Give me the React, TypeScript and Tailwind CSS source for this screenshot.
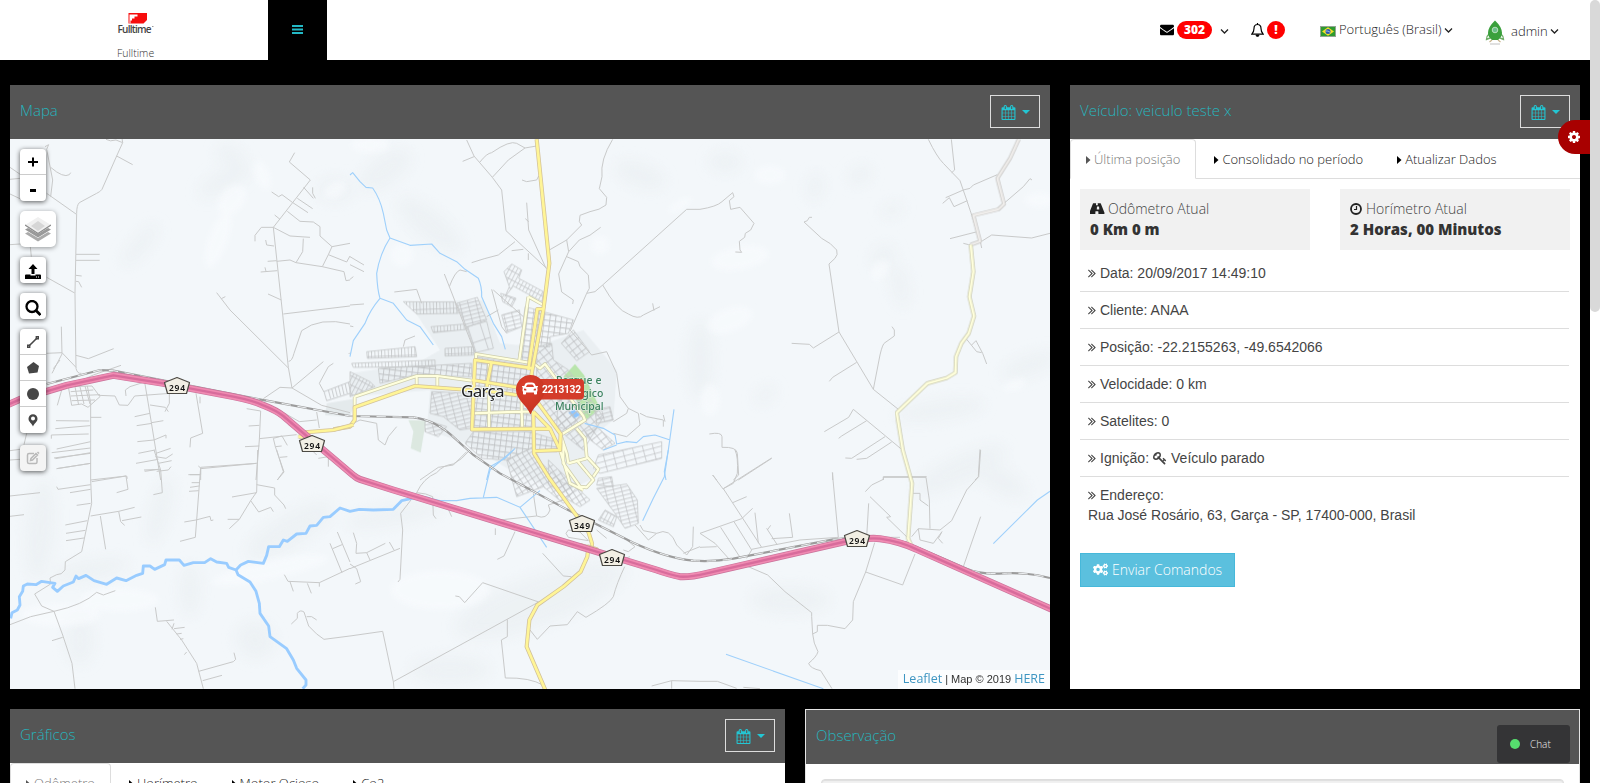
import React from "react";
import { FaEnvelope, FaCogs, FaCar } from "react-icons/fa";

const CALENDAR =
  "M192 1664h288v-288h-288v288zM544 1664h320v-288h-320v288zM192 1312h288v-320h-288v320zM544 1312h320v-320h-320v320zM192 928h288v-288h-288v288zM928 1664h320v-288h-320v288zM544 928h320v-288h-320v288zM1312 1664h288v-288h-288v288zM928 1312h320v-320h-320v320zM576 448v-288q0-13-9.5-22.5t-22.5-9.5h-64q-13 0-22.5 9.5t-9.5 22.5v288q0 13 9.5 22.5t22.5 9.5h64q13 0 22.5-9.5t9.5-22.5zM1312 1312h288v-320h-288v320zM928 928h320v-288h-320v288zM1312 928h288v-288h-288v288zM1344 448v-288q0-13-9.5-22.5t-22.5-9.5h-64q-13 0-22.5 9.5t-9.5 22.5v288q0 13 9.5 22.5t22.5 9.5h64q13 0 22.5-9.5t9.5-22.5zM1728 384v1280q0 52-38 90t-90 38h-1408q-52 0-90-38t-38-90v-1280q0-52 38-90t90-38h128v-96q0-66 47-113t113-47h64q66 0 113 47t47 113v96h384v-96q0-66 47-113t113-47h64q66 0 113 47t47 113v96h128q52 0 90 38t38 90z";
const KEY =
  "M832 512q0-80-56-136t-136-56-136 56-56 136q0 42 19 83-41-19-83-19-80 0-136 56t-56 136 56 136 136 56 136-56 56-136q0-42-19-83 41 19 83 19 80 0 136-56t56-136zm851 704q0 17-49 66t-66 49q-9 0-28.5-16t-36.5-33-38.5-40-24.5-26l-96 96 220 220q28 28 28 68 0 42-39 81t-81 39q-40 0-68-28l-671-671q-176 131-365 131-163 0-265.5-102.5t-102.5-265.5q0-160 95-313t248-248 313-95q163 0 265.5 102.5t102.5 265.5q0 189-131 365l355 355 96-96q-3-3-26-24.5t-40-38.5-33-36.5-16-28.5q0-17 49-66t66-49q13 0 23 10 6 6 46 44.5t82 79.5 86.5 86 73 78 28.5 41z";
const DOUBLE_RIGHT =
  "M979 960q0 13-10 23l-466 466q-10 10-23 10t-23-10l-50-50q-10-10-10-23t10-23l393-393-393-393q-10-10-10-23t10-23l50-50q10-10 23-10t23 10l466 466q10 10 10 23zm384 0q0 13-10 23l-466 466q-10 10-23 10t-23-10l-50-50q-10-10-10-23t10-23l393-393-393-393q-10-10-10-23t10-23l50-50q10-10 23-10t23 10l466 466q10 10 10 23z";
const ROAD =
  "M1111 1001v-4l-24-320q-1-13-11-22.5t-23-9.5h-186q-13 0-23 9.5t-11 22.5l-24 320v4q-1 12 8 20t21 8h244q12 0 21-8t8-20zm622 467q0 73-46 73h-704q13 0 22-9.5t8-22.5l-20-256q-1-13-11-22.5t-23-9.5h-272q-13 0-23 9.5t-11 22.5l-20 256q-1 13 8 22.5t22 9.5h-704q-46 0-46-73 0-54 26-116l417-1044q8-19 26-33t38-14h339q-13 0-23 9.5t-11 22.5l-15 192q-1 14 8 23t22 9h166q13 0 22-9t8-23l-15-192q-1-13-11-22.5t-23-9.5h339q20 0 38 14t26 33l417 1044q26 62 26 116z";
const COG =
  "M1152 896q0-106-75-181t-181-75-181 75-75 181 75 181 181 75 181-75 75-181zm512-109v222q0 12-8 23t-20 13l-185 28q-19 54-39 91 35 50 107 138 10 12 10 25t-9 23q-27 37-99 108t-94 71q-12 0-26-9l-138-108q-44 23-91 38-16 136-29 186-7 28-36 28h-222q-14 0-24.5-8.5t-11.5-21.5l-28-184q-49-16-90-37l-141 107q-10 9-25 9-14 0-25-11-126-114-165-168-7-10-7-23 0-12 8-23 15-21 51-66.5t54-70.5q-27-50-41-99l-183-27q-13-2-21-12.5t-8-23.5v-222q0-12 8-23t19-13l186-28q14-46 39-92-40-57-107-138-10-12-10-24 0-10 9-23 26-36 98.5-107.5t94.5-71.5q13 0 26 10l138 107q44-23 91-38 16-136 29-186 7-28 36-28h222q14 0 24.5 8.5t11.5 21.5l28 184q49 16 90 37l142-107q9-9 24-9 13 0 25 10 129 119 165 170 7 8 7 22 0 12-8 23-15 21-51 66.5t-54 70.5q26 50 41 98l183 28q13 2 21 12.5t8 23.5z";

function Glyph({ d, size, className = "" }: { d: string; size: number; className?: string }) {
  return (
    <svg width={size} height={size} viewBox="0 0 1792 1792" fill="currentColor" className={`shrink-0 ${className}`}>
      <path d={d} />
    </svg>
  );
}

function AngleDown({ className = "" }: { className?: string }) {
  return (
    <svg width="9" height="9" viewBox="0 0 9 9" fill="none" stroke="#222" strokeWidth="1.3" className={`shrink-0 ${className}`}>
      <path d="M1 2.5 4.500 6 8 2.5" />
    </svg>
  );
}

/* Map sheets: each covers a 350px-wide section, drawn at three units per pixel. */
type Sheet = { x: number; y: number; roads: string[]; streams?: string[] };
const sheets: Sheet[] = [
  {
    x: 0,
    y: 130,
    roads: [
      "M318 28Q330 36 348 30L368 38L350 78L306 178Q300 186 290 190L238 218Q230 226 230 250L225 490L228 715Q232 732 244 730",
      "M368 38L366 24M350 78L398 104M30 112L62 134M30 148L60 145M30 192L60 206M135 50L146 44L140 58L158 150L152 200M152 112Q190 145 208 134L212 128",
      "M140 190L228 252M228 373H299M228 391H299M228 436L245 438M228 454L236 455L245 472M140 442L224 489M184 590L186 672L156 730M140 670L186 668L228 712M228 676L265 686L341 656",
      "M30 344L90 340L94 380M884 68L868 96L931 150L820 292L865 712L876 774M911 172L940 205M938 172V190L946 205M892 205L938 236M877 217L924 248M815 186L836 200L846 194L877 217M862 244L900 274L940 276L960 290L960 318L996 350L1050 340M996 350L985 374L967 410M985 374L1040 396L1050 378M824 255L840 268",
      "M820 292L784 292L765 316V334M820 292L870 318L930 322M910 326L908 365L888 398M830 394L870 390L888 398L967 410L1032 425L1038 452L1050 450M803 394L830 392M782 426L832 422M795 412L798 424M797 330L800 345L822 348M650 488L690 540L865 714M664 506L676 500M804 492L844 510M850 552L1050 528M866 694Q876 694 882 670L905 602Q960 560 1050 582M876 774L970 695M876 774L965 826L1050 848M790 806L840 772L876 774M958 760L985 710L1000 700M958 760L972 786M160 716L180 690M1050 668L1046 672",
      "M205 770L215 826L245 822L264 832L300 800L276 768L205 770M212 785L280 780M212 798L300 794M215 812L285 810M225 770L236 825M240 770L252 822M255 768L270 822M172 826L185 780M296 796L345 798L358 825L384 826L404 798L510 790M205 770L280 735L363 706M262 768L272 818V1050M376 780L390 770L434 756L445 822L482 1050M376 780L378 798M272 862H304M168 872L268 873M166 896L270 887M154 926V915L266 912M170 957L272 935M155 968L272 954M166 986L272 968M170 1016L272 1000M272 1050L380 1038L382 1046",
      "M404 860L450 850M410 887L456 880M412 935L462 930M415 970L465 960M408 1000L475 988M432 1020L480 1018M450 825L496 832L505 845M455 878L490 872M462 930L498 915V925M468 970L512 955M475 1000L515 992M508 788V820L495 845M588 790L608 910L572 924L570 952M600 800V820M740 836L782 843L778 930L768 1050M746 888L778 886M735 950L778 948M778 926L890 914M820 925L826 950L852 1026L832 1050M820 925L846 918L862 946M826 950L845 948M950 846L958 894M830 836L898 875L950 870M570 1034H602V1016L770 1000M602 1016V1050M30 962L60 958M30 990L60 988M80 910L72 944M955 985L985 980V1010M940 965L950 975",
    ],
  },
  {
    x: 350,
    y: 130,
    roads: [
      "M350 30L372 78L427 142L455 180L468 302L590 415M338 94L372 80M390 96Q410 70 425 68Q480 30 500 40L525 54M427 142L475 90L525 54L560 48M516 150L530 155L560 150L566 138M530 218L536 300L588 415M526 266L536 275M485 362L520 358M535 370V390M365 398Q400 386 445 375L495 335",
      "M788 28Q750 90 756 140L748 176L770 202L768 225Q750 240 720 245L690 256L688 275L695 285L650 330L598 360M650 330L656 365L626 432L635 486L670 510L668 522M656 365L688 330Q720 320 752 292M650 380L685 395L690 410L715 435L718 475L710 490L735 485L758 465L1010 238H1050M758 465Q800 540 835 552Q865 570 880 555L930 530M908 520L912 542M710 490L662 600",
      "M0 380L42 405M0 404L42 425M0 448L10 440M0 525L42 522M133 486L200 478L215 520M283 432L298 470L376 670M298 470Q315 425 330 420L350 425M425 478L455 590L470 610M410 560L445 540M430 480L520 560M660 600L725 675L770 665L800 730L810 800L835 835L830 850L790 875M835 835L865 850L870 885L830 920L790 910M870 850L890 860L940 870V890M940 855L945 875",
      "M0 588L10 590M160 650L165 630L195 618M0 885L30 870L80 880L85 930L105 945L115 920L140 890M350 965L310 1005L265 1012L210 1050",
    ],
    streams: [
      "M0 135L8 128L30 155L48 172L68 174Q90 205 100 250L110 300L120 324L180 346L245 342L270 370L320 395L345 418L385 445Q396 470 395 500L430 580L455 620L466 658",
      "M120 324Q90 370 80 430Q82 480 90 505Q60 540 45 580L10 632L0 680M90 505L130 520L170 570L210 590L250 645",
      "M495 955L465 985L420 1010L410 1050M704 880L760 895L795 915L800 942L830 935L860 938L880 920L915 915L960 930M760 960L800 945M972 838L955 960L943 1025L948 1050",
    ],
  },
  {
    x: 700,
    y: 130,
    roads: [
      "M0 238Q50 230 66 215L98 188L102 200L88 212L92 238L120 232L162 280L152 300L136 310L134 322L118 334L120 360L125 367L106 366M336 262L328 262L322 272L312 276L365 325Q395 340 410 360Q415 375 405 385L387 402L417 606L520 778L595 838M417 606L340 654L328 643L275 640M470 697L398 742L388 754M520 778L540 675Q548 640 555 638L583 618V600L576 590",
      "M685 28Q710 80 730 100L780 152L800 210L840 330L845 354M754 28L764 120L755 128M737 203L790 180L810 175L820 165L892 134M728 220L748 203L762 230L802 212M750 326L832 305M790 340L806 344L848 332L875 315L995 324L1050 310M912 220L970 170L990 146L996 150M800 628L830 665L845 668M815 645L828 632L848 670L860 702",
      "M460 838L605 958M460 838L446 862L373 905M500 872L425 918L416 925M555 920L455 985L436 984M575 936L500 985L470 988M28 912Q65 905 66 920V952Q110 950 112 970L116 1035L100 1050M215 985L115 1050M840 958L835 1040L825 1050M550 1050V1040H680M398 1028V1050M38 1035L50 1050",
    ],
  },
  {
    x: 0,
    y: 450,
    roads: [
      "M272 90L275 160L245 305L196 335L195 360Q185 375 170 374L150 384L152 402L104 432L125 468L162 484L188 555L216 640L225 716M275 95L378 78L384 118L350 128M272 198L356 184L404 172M356 184L362 215L374 226M366 212L424 201M301 198L317 298M196 225L262 212M198 250L256 241M198 272L252 264M30 138L120 128M30 199L72 194M230 166L272 160M210 128L272 118M170 110L174 118L272 104M162 24L272 10M170 56L272 40",
      "M30 524L92 500L162 484Q250 465 290 427L310 435L346 422M156 572L188 562M482 60L487 128L460 134M462 0L482 60M434 64L475 58M466 20L498 25L518 12M470 64L505 60L513 50M602 52L586 262L540 274M602 52L770 40M565 74H600M570 112L598 108M575 98L600 98M567 124L596 122M553 216L588 210L630 199L633 212L640 210M595 48L602 54M773 0L770 126L752 152L718 208L688 236M770 104L824 114V135L852 165L857 176M696 141L770 128M752 152L776 186L812 172L820 185M683 208H718M830 0L850 65L832 90M840 22L862 20",
      "M466 472L472 514L522 510M500 514L545 570L590 640L610 716M516 538L522 520M522 536L554 532M530 552L545 550M540 568L550 566M553 614L560 606M596 664L700 635L707 628L702 608M608 692L666 676M990 280L1026 368M1012 246L1050 336M998 296L1026 284M1050 355L958 398L864 394L853 374M870 395L880 424M922 400L934 430M958 398L958 410M874 522L892 505V490Q900 478 912 486L926 528Q950 555 972 568L1050 558M920 500H935L950 510",
    ],
  },
  {
    x: 350,
    y: 450,
    roads: [
      "M360 0Q335 30 310 42Q280 45 260 68Q220 85 200 128L152 190L158 240L150 388L144 396M0 356L150 295M10 248L20 280L18 310L50 308L106 280M50 308L60 330M0 342L20 356L32 395L16 402M118 276L132 300M200 128Q230 130 248 140L250 195L258 206M0 558L98 544L130 695L132 716M130 695L566 456M316 438L328 440L344 458L398 398L566 456M472 508V560L454 570L466 684Q540 682 580 706M578 310L640 378L664 380M540 540L562 568L600 528L652 524L682 485L708 502Q780 460 790 440Q800 400 824 350",
      "M430 212L560 198L550 130M560 198Q590 210 600 180L595 165L640 150M495 245L462 318L442 328M436 235V255M296 180L305 200M345 180L352 190M648 250L655 240L690 246L715 272L655 262ZM740 240L770 265M905 708L965 692L1050 694M965 692V716M830 270L855 290L835 305L820 300M840 320L825 325M855 225L895 270L920 250L880 242L870 225M920 250Q960 230 980 285L1010 315L1028 290L1030 230M1000 310L1050 290",
    ],
    streams: [
      "M490 0L420 60L400 142M210 138L270 152L320 152L360 145L440 142L510 172L590 292M510 172L570 122M955 0L943 80L910 145L878 212",
    ],
  },
  {
    x: 700,
    y: 450,
    roads: [
      "M105 0Q115 20 112 70L100 100L70 116M215 24L70 116L185 292M38 75L70 118M0 250L125 206L158 175M98 158L140 140M62 232L122 325M102 215L155 300L140 325M155 298L185 292L300 270L415 262L397 67M0 250L45 280L90 330M0 292L50 290M165 188L175 280M200 235L232 285M202 240L212 226M215 266L278 262L268 190M510 140L572 200L560 202L632 272M506 160L500 262L600 262M496 125L515 105L550 88V82H678L688 150L690 236M640 130H660V150L685 168M842 0L836 80L800 120L755 212L720 240L655 236L635 260M655 236L660 270L700 280L726 245L715 265L728 280M842 200L790 350",
      "M524 278L497 366L460 455L458 510L435 536L382 526H352V545L338 552L335 500V488L255 425L203 375L140 348M497 366L608 405L645 312M338 552Q340 580 354 605Q350 620 326 640Q330 655 362 662L396 716M0 694H52L110 715M130 712L180 716",
    ],
    streams: ["M78 613L370 716", "M880 281L1012 150L1050 124"],
  },
];

/* City blocks: polygon outline, block pattern. */
const blocks: [string, string][] = [
  ["M160 515L315 516L325 550L200 552Z", "combA"],
  ["M320 520L382 502L410 570L350 592Z", "gridC"],
  ["M350 590L410 574L430 655L375 668Z", "combB"],
  ["M243 590L345 582L350 598L250 608Z", "combA"],
  ["M485 402L515 420L506 445L580 485L576 515L490 468L465 500L478 470L462 425Z", "gridB"],
  ["M452 490L498 505L485 530L458 515Z", "gridB"],
  ["M455 555L508 540L515 590L470 608Z", "gridC"],
  ["M525 530L670 570L655 610L600 620L600 650L560 650L550 710L505 690Z", "gridA"],
  ["M560 650L605 640L610 690L655 720L760 860L700 960L650 920L560 820Z", "gridD"],
  ["M670 600L718 665L680 692L634 640Z", "gridD"],
  ["M375 680L550 710L550 900L365 900Z", "gridA"],
  ["M370 905L550 905L555 950L470 990L395 985L345 940Z", "gridA"],
  ["M0 725L60 755L75 770L0 800Z", "gridB"],
  ["M50 665L195 650L200 680L52 685Z", "combA"],
  ["M5 700L255 690L255 710L10 712Z", "combA"],
  ["M85 715L365 700L365 740L190 736L90 760Z", "gridA"],
  ["M285 655L370 650L370 675L285 678Z", "combA"],
  ["M245 785L365 790L362 895L330 900L280 860L240 850Z", "gridC"],
  ["M225 870L290 890L265 920L225 905Z", "gridC"],
  ["M555 910L620 930L620 965L555 960Z", "gridA"],
  ["M705 905L740 890L795 940L760 960L715 925Z", "gridD"],
  ["M745 975L935 935L935 985L750 1030L730 1015Z", "combC"],
  ["M625 790L700 840L660 900L620 890Z", "gridD"],
  ["M735 840L780 830L790 870L740 880Z", "gridC"],
  ["M470 990L550 950L575 1000L640 1060L690 1060L640 1120L580 1070L500 1100Z", "gridE"],
  ["M595 990L720 1110L690 1130L640 1100L595 1060Z", "gridE"],
  ["M745 1045L785 1040L790 1070L740 1065Z", "gridC"],
  ["M740 1075L830 1062L862 1110L865 1180L825 1195L795 1150Z", "gridC"],
  ["M765 1140L800 1160L790 1190L745 1170Z", "gridB"],
];

const shades: [number, number, number, number, number][] = [
  [230, 155, 14, 10, 20], [225, 180, 30, 10, -30], [140, 245, 26, 8, -50], [385, 170, 30, 14, -35], [335, 190, 18, 12, 0],
  [640, 175, 26, 12, 20], [725, 162, 16, 10, 0], [860, 175, 12, 9, -30], [815, 187, 8, 14, 10], [892, 210, 12, 6, -20],
  [883, 257, 10, 14, 40], [900, 285, 8, 22, -10], [1030, 365, 30, 10, -20], [765, 395, 12, 7, -40], [700, 360, 12, 40, 0],
  [940, 410, 45, 10, -8], [40, 530, 14, 50, 5], [90, 570, 40, 10, -10], [160, 510, 10, 35, 15], [290, 530, 50, 16, -30],
  [395, 515, 50, 10, -10], [190, 590, 10, 26, 0], [255, 640, 20, 18, 30], [540, 600, 90, 25, -20], [790, 600, 40, 14, 0],
  [960, 470, 50, 14, -25], [80, 640, 14, 24, 0], [450, 670, 40, 14, 0], [430, 225, 40, 14, 40], [1000, 480, 30, 12, 30],
];
const lights: [number, number, number, number, number][] = [
  [232, 200, 18, 12, -50], [262, 175, 8, 16, -20], [218, 240, 10, 30, 20], [335, 190, 12, 8, -30], [370, 145, 20, 8, 0],
  [402, 255, 12, 12, 0], [770, 175, 16, 10, 0], [740, 258, 30, 12, -10], [730, 320, 24, 12, -20], [1040, 200, 16, 8, 0],
  [680, 205, 14, 5, -30], [880, 270, 12, 8, -50], [1015, 385, 12, 6, -20], [270, 570, 60, 10, -12], [60, 615, 40, 12, 0],
  [120, 600, 40, 12, 0], [440, 590, 50, 20, 0], [710, 400, 10, 16, 0], [600, 245, 10, 10, 0],
];

function Cased({ d, w, casing, fill }: { d: string; w: number; casing: string; fill: string }) {
  return (
    <g fill="none" strokeLinejoin="round">
      <path d={d} stroke={casing} strokeWidth={w} />
      <path d={d} stroke={fill} strokeWidth={w - 4.5} />
    </g>
  );
}

function Shield({ x, y, label }: { x: number; y: number; label: string }) {
  return (
    <g transform={`translate(${x} ${y})`}>
      <path d="M0-8.5 12.5-3.5 9.5 7.5H-9.5L-12.5-3.5Z" fill="#f2efe4" stroke="#4c4a44" strokeWidth="1.2" strokeLinejoin="round" />
      <text y="5" textAnchor="middle" fontSize="8.500" fontWeight="600" fill="#111" textLength="16" fontFamily="'Noto Sans', sans-serif">
        {label}
      </text>
    </g>
  );
}

const RAILWAY =
  "M140 762L300 720L340 722L800 812L1050 858L1240 862Q1310 870 1370 930L1420 975L1500 1030L1700 1138L1900 1238Q2000 1284 2080 1292Q2140 1296 2200 1286L2500 1228Q2630 1216 2720 1238L2900 1316Q2940 1334 3010 1330Q3080 1326 3150 1344";
const HIGHWAY =
  "M24 824L60 808L200 766L340 736L490 760L700 800Q760 812 790 826Q830 842 850 858L920 918L1000 985L1060 1036Q1068 1044 1080 1048L1180 1080L1740 1250L1970 1320Q2010 1334 2040 1340Q2070 1342 2120 1330L2530 1236Q2600 1222 2640 1226Q2700 1234 2750 1258L3160 1440";

function CityMap() {
  return (
    <svg className="block" width="1040" height="550" viewBox="10 139 1040 550">
      <defs>
        <filter id="soft" x="-30%" y="-30%" width="160%" height="160%">
          <feGaussianBlur stdDeviation="7" />
        </filter>
        <filter id="softer" x="-30%" y="-30%" width="160%" height="160%">
          <feGaussianBlur stdDeviation="3" />
        </filter>
        <pattern id="gridA" width="17" height="17" patternUnits="userSpaceOnUse" patternTransform="rotate(7)">
          <path d="M0 0H17M0 0V17" stroke="#bfc1c3" strokeWidth="5" fill="none" />
        </pattern>
        <pattern id="gridB" width="11" height="24" patternUnits="userSpaceOnUse" patternTransform="rotate(28)">
          <path d="M0 0H11M0 0V24" stroke="#bfc1c3" strokeWidth="4" fill="none" />
        </pattern>
        <pattern id="gridC" width="24" height="12" patternUnits="userSpaceOnUse" patternTransform="rotate(-14)">
          <path d="M0 0H24M0 0V12" stroke="#bfc1c3" strokeWidth="4.2" fill="none" />
        </pattern>
        <pattern id="gridD" width="19" height="20" patternUnits="userSpaceOnUse" patternTransform="rotate(52)">
          <path d="M0 0H19M0 0V20" stroke="#bfc1c3" strokeWidth="4.8" fill="none" />
        </pattern>
        <pattern id="gridE" width="16" height="17" patternUnits="userSpaceOnUse" patternTransform="rotate(-33)">
          <path d="M0 0H16M0 0V17" stroke="#bfc1c3" strokeWidth="4.8" fill="none" />
        </pattern>
        <pattern id="combA" width="10" height="34" patternUnits="userSpaceOnUse" patternTransform="rotate(-2)">
          <path d="M0 0H10M0 0V34" stroke="#bfc1c3" strokeWidth="4.2" fill="none" />
        </pattern>
        <pattern id="combB" width="38" height="80" patternUnits="userSpaceOnUse" patternTransform="rotate(-18)">
          <path d="M0 0H38M0 0V80" stroke="#bfc1c3" strokeWidth="4.2" fill="none" />
        </pattern>
        <pattern id="combC" width="30" height="17" patternUnits="userSpaceOnUse" patternTransform="rotate(-15)">
          <path d="M0 0H30M0 0V17" stroke="#bfc1c3" strokeWidth="4.2" fill="none" />
        </pattern>
        <radialGradient id="pin" cx="40%" cy="30%" r="80%">
          <stop offset="0" stopColor="#dd402d" />
          <stop offset="1" stopColor="#c2321f" />
        </radialGradient>
      </defs>
      <rect x="10" y="139" width="1040" height="550" fill="#f3f7fa" />
      <g filter="url(#soft)" fill="#e9eef1" opacity="0.6">
        {shades.map(([x, y, rx, ry, a], i) => (
          <ellipse key={i} rx={rx} ry={ry} transform={`translate(${x} ${y}) rotate(${a})`} />
        ))}
      </g>
      <g filter="url(#softer)" fill="#f9fcfe" opacity="0.6">
        {lights.map(([x, y, rx, ry, a], i) => (
          <ellipse key={i} rx={rx} ry={ry} transform={`translate(${x} ${y}) rotate(${a})`} />
        ))}
      </g>

      <g transform="translate(350 130) scale(0.33333)">
        <path d="M175 515L400 510L450 640L560 650L700 600L800 720L790 870L700 940L740 1040L640 1090L480 1020L350 940L230 900L240 780L0 800V730L200 700L270 660Z" fill="#eaeff2" />
        <path d="M-70 820L20 805L0 860L-75 855Z" fill="#e4eaec" />
        <path d="M175 870L228 872L212 968L182 955L190 905Z" fill="#dce8e0" />
        <path d="M675 702L702 735L750 835L710 868L640 740Z" fill="#b9e5ac" />
        <path d="M655 848L672 838L690 855L672 866Z" fill="#8dc6ff" />
        <path d="M775 860L925 850L930 870L800 870Z" fill="#f3f7fa" />
        {blocks.map(([d, p], i) => (
          <path key={i} d={d} fill={`url(#${p})`} stroke="#c4c6c8" strokeWidth="2.4" />
        ))}
        <path d="M-78 785L0 755M-78 785L-70 812L0 790M-65 780L-58 806M-55 776L-48 803M-45 772L-38 800M-35 768L-28 797M-25 764L-18 794M-15 760L-8 791M-5 757L2 788" stroke="#c2c4c6" strokeWidth="2.6" fill="none" />
      </g>

      {sheets.map((s, i) => (
        <g key={i} transform={`translate(${s.x} ${s.y}) scale(0.33333)`} fill="none" strokeLinejoin="round">
          {s.roads.map((d, j) => (
            <path key={j} d={d} stroke="#c8c9c9" strokeWidth="3" />
          ))}
          {s.streams?.map((d, j) => (
            <path key={j} d={d} stroke="#9fd0fb" strokeWidth="3.400" />
          ))}
        </g>
      ))}

      {/* river */}
      <g fill="none" stroke="#99ccff" strokeWidth="8.6" strokeLinejoin="round">
        <path
          transform="translate(0 450) scale(0.33333)"
          d="M32 505L36 488L52 480L60 465L58 440L68 424L70 408L82 402L108 404L125 394L165 400L158 412L172 424L190 408L220 396L228 378L236 386L258 376L282 392L320 403L350 384L378 392L410 376L428 370L430 348L450 348L464 358L494 344L498 330H538L552 346L580 338L614 338L632 326L650 336L680 340L686 352L708 360L714 374L750 396L768 424L778 460L780 490L806 528L810 560L860 596L880 630L890 655L918 690L918 705L908 716"
        />
        <path
          transform="translate(0 450) scale(0.33333)"
          d="M708 360L722 345L745 334L790 340L800 316L806 290L838 290L850 270L862 274L890 252L918 250L930 228L950 226L970 202L990 200L1020 174L1050 184L1078 178L1120 180L1180 178L1205 152L1260 140L1290 146"
        />
      </g>

      {/* railway */}
      <g transform="translate(0 130) scale(0.33333)" fill="none">
        <path d={RAILWAY} stroke="#9c9c9c" strokeWidth="6.5" />
        <path d={RAILWAY} stroke="#eef1f3" strokeWidth="3" strokeDasharray="28 20" />
      </g>

      {/* secondary roads */}
      <g transform="translate(350 130) scale(0.33333)">
        <Cased d="M378 684L378 672L550 700L570 715L585 702L700 858L705 870L632 915M535 500L580 525M535 500L508 690M14 800L200 738H262L365 752M200 738V768M262 738V770M14 800V830M417 700V900M365 850L515 845L517 900M550 845H515L515 800M632 915L650 970L655 1000M680 895L705 925L710 980L745 1018L730 1040M655 1000L710 985M640 940L640 1000L690 1070L710 1072L730 1050L680 990M630 960L660 1060L700 1080" w={11} casing="#cdcdae" fill="#ffffdc" />
        <Cased d="M560 28L598 400L580 540L545 730L540 790M578 537H562L535 720M550 715L375 690L366 898L600 896L630 960L555 963M366 750L550 780M424 700L410 770M-50 898L0 890L14 870V832L195 768L360 780M360 775L500 795M550 845L552 970L595 1040L660 1130L715 1205L726 1240L725 1255M565 820L632 912L630 960M550 845L600 896" w={12.500} casing="#d3c29a" fill="#fff596" />
        <Cased d="M690 1245L740 1258L715 1250L712 1280L692 1325L640 1370L562 1425L538 1470L530 1550L586 1680" w={12.500} casing="#d0bf9a" fill="#fff596" />
      </g>
      <g transform="translate(0 130) scale(0.33333)">
        <Cased d="M870 880L905 908L1000 900L1060 884M895 920H930" w={12.500} casing="#d3c29a" fill="#fff596" />
      </g>
      <g transform="translate(700 130) scale(0.33333)">
        <Cased d="M956 28L930 85L892 145L912 222L895 238L820 256L840 334L812 344" w={11.500} casing="#c4c3c1" fill="#f0eeec" />
        <Cased d="M812 344L820 425L808 500L822 558L806 610L784 640L768 680L766 728L740 744L682 760L590 848L608 960L636 1060L624 1225L638 1255" w={12} casing="#c3c3a8" fill="#ffffdc" />
      </g>

      {/* highway */}
      <g transform="translate(0 130) scale(0.33333)" fill="none" strokeLinejoin="round">
        <path d={HIGHWAY} stroke="#c9729a" strokeWidth="21" />
        <path d={HIGHWAY} stroke="#f08bb2" strokeWidth="17" />
        <path d={HIGHWAY} stroke="#d86c9c" strokeWidth="7" />
      </g>

      <Shield x={177} y={386} label="294" />
      <Shield x={312} y={444} label="294" />
      <Shield x={582} y={524} label="349" />
      <Shield x={612} y={558} label="294" />
      <Shield x={857} y={539} label="294" />

      <text x="461" y="396.500" fontSize="17" fontWeight="400" textLength="43.500" fill="#222" stroke="#f3f7fa" strokeWidth="2" paintOrder="stroke" fontFamily="'Noto Sans', sans-serif">
        Garça
      </text>
      <g fontSize="10.500" fontWeight="500" fill="#3d8360" stroke="#f3f7fa" strokeOpacity="0.5" strokeWidth="1.500" paintOrder="stroke" fontFamily="'Noto Sans', sans-serif">
        <text x="556" y="384" textLength="45.500">Parque e</text>
        <text x="555" y="397" textLength="48.500">Ecológico</text>
        <text x="555" y="410" textLength="48.500">Municipal</text>
      </g>

      {/* vehicle marker */}
      <rect x="527" y="379" width="57" height="20.500" rx="4" fill="#d43c2a" />
      <path d="M530.500 414.500C527 405 516 400 516 389.500A14.500 14.500 0 0 1 545 389.500C545 400 534 405 530.500 414.500Z" fill="url(#pin)" />
      <FaCar x="522" y="380.500" width="17" height="17" color="#fff" />
      <text x="542" y="392.700" fontSize="10.200" fontWeight="700" textLength="39" fill="#fff" fontFamily="Roboto, sans-serif">
        2213132
      </text>
    </svg>
  );
}

function CalendarButton() {
  return (
    <div className="flex h-[33px] w-[50px] items-center gap-[6px] border border-[#ddd] pt-px pl-[10px] text-[#23c6d3]">
      <Glyph d={CALENDAR} size={15} />
      <span className="h-0 w-0 border-x-4 border-t-4 border-x-transparent border-t-[#23c6d3]" />
    </div>
  );
}

function PanelHeader({ title, calendar }: { title: string; calendar?: boolean }) {
  return (
    <div className="flex h-[54px] shrink-0 items-start justify-between bg-[#555] px-[10px] pt-[10px]">
      <h2 className="pt-[3px] text-[15px] leading-[24px] font-light text-[#26b4bd]">{title}</h2>
      {calendar && <CalendarButton />}
    </div>
  );
}

function Tab({ label, active }: { label: string; active?: boolean }) {
  return (
    <div
      className={
        active
          ? "-mb-px flex h-[40px] items-center rounded-t border border-[#ddd] border-b-white bg-white px-[15px] pt-[2px] text-[#777]"
          : "flex h-[39px] items-center border border-transparent px-[15px] pt-[3px] text-[#222]"
      }
    >
      <svg width="5" height="8" viewBox="0 0 5 8" className={active ? "mr-[3px] text-[#555]" : "mr-[3px] text-black"}>
        <path d="M0 0 4.500 4 0 8Z" fill="currentColor" />
      </svg>
      <span className="text-[13px] font-light whitespace-nowrap">{label}</span>
    </div>
  );
}

const BAR = "flex w-[26px] flex-col overflow-hidden rounded-[4px] bg-white shadow-[0_1px_5px_rgba(0,0,0,0.65)]";

function MapControls() {
  return (
    <div className="absolute top-[10px] left-[10px] flex flex-col gap-[10px]">
      <div className={BAR}>
        <span className="flex h-[26px] items-center justify-center border-b border-[#ccc]">
          <svg width="10" height="10" viewBox="0 0 10 10"><path d="M5 0.500V9.500M0 5H10" stroke="#000" strokeWidth="2" /></svg>
        </span>
        <span className="flex h-[26px] items-center justify-center pt-[4px]">
          <svg width="6" height="3"><path d="M0 1.500H6" stroke="#000" strokeWidth="3" /></svg>
        </span>
      </div>
      <div className="flex h-[36px] w-[36px] items-center justify-center rounded-[5px] bg-white shadow-[0_1px_5px_rgba(0,0,0,0.4)]">
        <svg width="26" height="26" viewBox="0 0 26 26">
          <path d="M0 17.500 13 25.500 26 17.500 23 16 13 22 3 16Z" fill="#aaa" />
          <path d="M0 13.500 13 21.500 26 13.500 23 12 13 18 3 12Z" fill="#999" />
          <path d="M0 9 13 18 26 9 13 1Z" fill="#fff" />
          <path d="M0 9 13 17.500 26 9 13 1Z" fill="#f0f0f0" />
          <path d="M6 10 13 5 20 10 13 15Z" fill="#d6d6d6" />
          <path d="M0 9 13 17.500 26 9" fill="none" stroke="#8b8b8b" strokeWidth="1.200" />
        </svg>
      </div>
      <div className={`${BAR} h-[26px] items-center justify-center`}>
        <svg width="16" height="16" viewBox="0 0 16 16" className="mt-[3px]">
          <path d="M8 0 12.500 5H9.500V10H6.500V5H3.500Z" />
          <path fillRule="evenodd" d="M0 11.500Q0 10.500 1 10.500H5.500V11.500H10.500V10.500H15Q16 10.500 16 11.500V15H0ZM11 12.500V13.500H12V12.500ZM13 12.500V13.500H14V12.500Z" />
        </svg>
      </div>
      <div className={`${BAR} h-[26px] items-center justify-center`}>
        <svg width="16" height="16" viewBox="0 0 16 16" fill="none" stroke="#000" strokeWidth="2.300" className="mt-[4px]">
          <circle cx="7" cy="6.500" r="5.500" />
          <path d="M11 10.500 15.500 15" strokeWidth="2.800" />
        </svg>
      </div>
      <div className={BAR}>
        <span className="flex h-[26px] items-center justify-center border-b border-[#ccc]">
          <svg width="14" height="14" viewBox="0 0 14 14" fill="none" stroke="#464646" strokeWidth="1.400">
            <path d="M3.200 10.800 10.800 3.200" strokeWidth="1.600" /><path d="M1.700 10.300h2v2h-2zM10.300 1.700h2v2h-2z" />
          </svg>
        </span>
        <span className="flex h-[26px] items-center justify-center border-b border-[#ccc]">
          <svg width="14" height="14" viewBox="0 0 14 14"><path d="M7.500 1 13 5 11.500 11.500 3 12.500 1 6Z" fill="#464646" /></svg>
        </span>
        <span className="flex h-[26px] items-center justify-center border-b border-[#ccc]">
          <span className="h-[12px] w-[12px] rounded-full bg-[#464646]" />
        </span>
        <span className="flex h-[26px] items-center justify-center">
          <svg width="10" height="13" viewBox="0 0 10 13"><path fillRule="evenodd" d="M5 12.500C4 9.500 .5 8 .5 4.800A4.500 4.500 0 0 1 9.500 4.800C9.500 8 6 9.500 5 12.500ZM5 2.600A2 2 0 1 0 5 6.600 2 2 0 1 0 5 2.600Z" fill="#464646" /></svg>
        </span>
      </div>
      <div className="mt-[2px] flex h-[26px] w-[26px] items-center justify-center rounded-[4px] bg-[#f4f4f4] shadow-[0_1px_5px_rgba(0,0,0,0.65)]">
        <svg width="14" height="14" viewBox="0 0 14 14" fill="none" stroke="#b9b9b9" strokeWidth="1.500">
          <path d="M8 2.500H3Q1.500 2.500 1.500 4V11Q1.500 12.500 3 12.500H9.500Q11 12.500 11 11V7" />
          <path d="M4.500 9.500 5 7.500 10 2.500 11.500 4 6.500 9ZM11.500 1 13 2.500" />
        </svg>
      </div>
    </div>
  );
}

function Header() {
  return (
    <header className="flex h-[60px] shrink-0 bg-white">
      <div className="flex w-[268px] flex-col items-start pt-[13px] pl-[117px]">
        <svg width="38" height="24" viewBox="0 0 38 24">
          <path d="M11.500 0H30V7L26.500 10.500H11.500Z" fill="#f70d0d" />
          <path d="M12.500 1.500H20.500V3.500H17.500V5.500H15V7.500H13.500V10.500H12.500Z" fill="#fff" />
          <text x="0.500" y="20" fontSize="10" fontWeight="600" textLength="34" fill="#444" fontFamily="'Open Sans', sans-serif">Fulltime</text>
          <path d="M35 13.500h1.500" stroke="#999" />
        </svg>
        <span className="mt-[9px] text-[10.500px] leading-[14px] font-light text-[#333]">Fulltime</span>
      </div>
      <div className="flex w-[59px] items-center justify-center bg-black pb-px">
        <svg width="11" height="9" viewBox="0 0 11 9"><path d="M0 1H11M0 4.500H11M0 8H11" stroke="#23b9c6" strokeWidth="2" /></svg>
      </div>
      <div className="flex flex-1 items-center justify-end pr-[30px] text-[13px] font-light text-[#222]">
        <FaEnvelope size={14} className="text-black" />
        <span className="ml-[3px] flex h-[18px] w-[35px] items-center justify-center rounded-full bg-[#f00] text-[12px] font-extrabold text-white">302</span>
        <AngleDown className="mt-[3px] ml-[8px]" />
        <svg width="13" height="14" viewBox="0 0 13 14" fill="none" stroke="#000" strokeWidth="1.200" className="ml-[22px]">
          <path d="M6.500 1.500C4 1.500 3 3.500 3 5.500C3 8 2.500 9.500 .8 11.200H12.200C10.500 9.500 10 8 10 5.500C10 3.500 9 1.500 6.500 1.500ZM6.500 0V1.500" />
          <path d="M5 12A1.500 1.500 0 0 0 8 12Z" fill="#000" strokeWidth="0.800" />
        </svg>
        <span className="ml-[3px] flex h-[18px] w-[18px] items-center justify-center rounded-full bg-[#f00] text-[12px] font-extrabold text-white">!</span>
        <svg width="16" height="11" viewBox="0 0 16 11" className="mt-[2px] ml-[35px]">
          <rect width="16" height="11" fill="#93a593" />
          <rect x="1" y="1" width="14" height="9" fill="#2e9a2e" />
          <path d="M8 1.200 14 5.500 8 9.800 2 5.500Z" fill="#f4e02a" />
          <circle cx="8" cy="5.500" r="2.500" fill="#2b57ad" />
          <path d="M5.700 5Q8 4.500 10.200 6.300" stroke="#cfe0f5" strokeWidth="0.700" fill="none" />
        </svg>
        <span className="ml-[3px] w-[103px] whitespace-nowrap">Português (Brasil)</span>
        <AngleDown className="ml-[2px]" />
        <svg width="20" height="25" viewBox="0 0 20 25" className="mt-[5px] ml-[32px]">
          <path d="M4 14Q1.500 16 1.500 19.500L5 18M16 14Q18.500 16 18.500 19.500L15 18" fill="none" stroke="#6fae68" strokeWidth="1.400" />
          <path d="M7 20 4.500 22M13 20 15.500 22" stroke="#c8b48a" strokeWidth="1.200" />
          <path d="M10 .5Q17 7 17 13Q17 17 13 20H7Q3 17 3 13Q3 7 10 .5Z" fill="#3aa03c" />
          <circle cx="10" cy="10" r="2.800" fill="#6cc08a" stroke="#cfead2" strokeWidth="0.800" />
          <path d="M5 24H15" stroke="#ccc" strokeWidth="1.200" />
        </svg>
        <span className="mt-[3px] ml-[6px] w-[38px]">admin</span>
        <AngleDown className="mt-[3px] mr-px ml-[1px]" />
      </div>
    </header>
  );
}

const rows: React.ReactNode[] = [
  "Data: 20/09/2017 14:49:10",
  "Cliente: ANAA",
  "Posição: -22.2155263, -49.6542066",
  "Velocidade: 0 km",
  "Satelites: 0",
  <span key="ign" className="flex items-center">
    Ignição:
    <Glyph d={KEY} size={14} className="mr-[4px] ml-[4px]" />
    Veículo parado
  </span>,
];

function VehiclePanel() {
  return (
    <section className="flex w-[510px] flex-col bg-white">
      <PanelHeader title="Veículo: veiculo teste x" calendar />
      <div className="flex h-[40px] shrink-0 border-b border-[#ddd]">
        <Tab label="Última posição" active />
        <span className="w-[2px]" />
        <Tab label="Consolidado no período" />
        <span className="w-[2px]" />
        <Tab label="Atualizar Dados" />
      </div>
      <div className="mx-[10px] mt-[10px] flex gap-[30px] text-[14px] leading-[21px]">
        <div className="h-[61px] flex-1 bg-[#f1f1f1] px-[10px] pt-[9px] text-[#444]">
          <div className="flex items-center font-light"><Glyph d={ROAD} size={15} className="mr-[3px] text-[#222]" />Odômetro Atual</div>
          <div className="text-[15px] font-extrabold text-[#333]">0 Km 0 m</div>
        </div>
        <div className="h-[61px] flex-1 bg-[#f1f1f1] px-[10px] pt-[9px] text-[#444]">
          <div className="flex items-center font-light">
            <svg width="12" height="12" viewBox="0 0 12 12" fill="none" stroke="#222" className="mr-[4px]"><circle cx="6" cy="6" r="5" strokeWidth="1.800" /><path d="M6.500 3V6.500H4" strokeWidth="1.200" /></svg>
            Horímetro Atual
          </div>
          <div className="text-[15px] font-extrabold text-[#333]">2 Horas, 00 Minutos</div>
        </div>
      </div>
      <ul className="mr-[11px] ml-[10px] pt-[5px] font-['Liberation_Sans',sans-serif] text-[14px] leading-[20px] text-[#444]">
        {rows.map((row, i) => (
          <li key={i} className="flex h-[37px] items-center border-b border-[#ddd] pl-[8px]">
            <Glyph d={DOUBLE_RIGHT} size={14} className="mr-[1px] mb-px -ml-[3px]" />
            {row}
          </li>
        ))}
        <li className="pt-[8px] pl-[8px]">
          <div className="flex items-center"><Glyph d={DOUBLE_RIGHT} size={14} className="mr-[1px] mb-px -ml-[3px]" />Endereço:</div>
          <div>Rua José Rosário, 63, Garça - SP, 17400-000, Brasil</div>
        </li>
      </ul>
      <button className="mt-[28px] ml-[10px] flex h-[34px] w-[155px] items-center gap-[4px] border border-[#46b8da] bg-[#5bc0de] pb-[2px] pl-[12px] text-[14px] font-light whitespace-nowrap text-white">
        <FaCogs size={15} />
        Enviar Comandos
      </button>
    </section>
  );
}

export default function App() {
  return (
    <div className="flex h-[783px] w-[1600px] overflow-hidden bg-white font-['Open_Sans',sans-serif]">
      <div className="relative flex w-[1590px] flex-col bg-black">
        <Header />
        <main className="flex flex-col gap-[20px] px-[10px] pt-[25px]">
          <div className="flex h-[604px] gap-[20px]">
            <section className="flex w-[1040px] flex-col">
              <PanelHeader title="Mapa" calendar />
              <div className="relative h-[550px]">
                <CityMap />
                <MapControls />
                <div className="absolute right-0 bottom-0 flex h-[19px] items-center gap-[3px] bg-white/70 px-[5px] text-[12.500px] text-[#333]">
                  <span className="text-[#2a8abb] opacity-90">Leaflet</span>
                  <span className="font-['Liberation_Sans',sans-serif] text-[11px]">| Map © 2019</span>
                  <span className="text-[#2a8abb] opacity-90">HERE</span>
                </div>
              </div>
            </section>
            <VehiclePanel />
          </div>
          <div className="flex h-[74px] gap-[20px] overflow-hidden">
            <section className="flex w-[775px] flex-col bg-white">
              <PanelHeader title="Gráficos" calendar />
              <div className="flex h-[40px] shrink-0 border-b border-[#ddd]">
                <Tab label="Odômetro" active />
                <span className="w-[2px]" />
                <Tab label="Horímetro" />
                <span className="w-[2px]" />
                <Tab label="Motor Ocioso" />
                <span className="w-[2px]" />
                <Tab label="Co2" />
              </div>
            </section>
            <section className="flex h-[200px] w-[775px] flex-col border border-[#e5e5e5] bg-white">
              <PanelHeader title="Observação" />
              <div className="mx-[15px] mt-[15px] h-[60px] shrink-0 rounded border border-[#ddd] bg-[#f1f1f1] shadow-[inset_0_1px_1px_rgba(0,0,0,0.08)]" />
            </section>
          </div>
        </main>
        <div className="absolute top-[120px] right-0 flex h-[34px] w-[32px] items-center rounded-l-full bg-[#a80000] pl-[9px] text-white">
          <Glyph d={COG} size={14} />
        </div>
        <div className="absolute top-[725px] left-[1497px] flex h-[38px] w-[73px] items-center gap-[10px] rounded-[3px] bg-[#343436] pl-[13px] text-[10px] font-light text-[#eee]">
          <span className="h-[10px] w-[10px] rounded-full bg-[#56dd6e]" />
          Chat
        </div>
      </div>
      <div className="w-[10px] bg-white">
        <div className="h-[312px] rounded-[5px] bg-[#d9d9d9]" />
      </div>
    </div>
  );
}
